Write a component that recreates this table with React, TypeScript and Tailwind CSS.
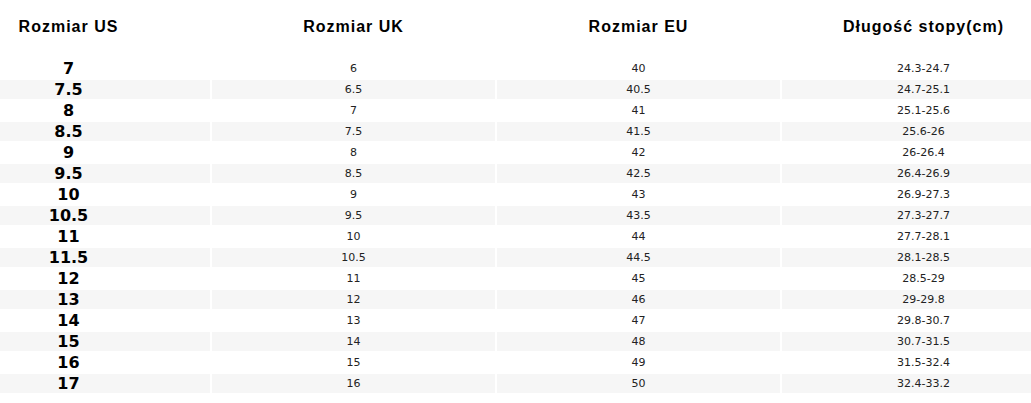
import React from "react";

const rows: [string, string, string, string][] = [
  ["7", "6", "40", "24.3-24.7"],
  ["7.5", "6.5", "40.5", "24.7-25.1"],
  ["8", "7", "41", "25.1-25.6"],
  ["8.5", "7.5", "41.5", "25.6-26"],
  ["9", "8", "42", "26-26.4"],
  ["9.5", "8.5", "42.5", "26.4-26.9"],
  ["10", "9", "43", "26.9-27.3"],
  ["10.5", "9.5", "43.5", "27.3-27.7"],
  ["11", "10", "44", "27.7-28.1"],
  ["11.5", "10.5", "44.5", "28.1-28.5"],
  ["12", "11", "45", "28.5-29"],
  ["13", "12", "46", "29-29.8"],
  ["14", "13", "47", "29.8-30.7"],
  ["15", "14", "48", "30.7-31.5"],
  ["16", "15", "49", "31.5-32.4"],
  ["17", "16", "50", "32.4-33.2"],
];

const headers = ["Rozmiar US", "Rozmiar UK", "Rozmiar EU", "Długość stopy(cm)"];

export default function App() {
  return (
    <div className="w-[1031px] h-[403px] overflow-hidden bg-white">
      <div className="ml-[-73px] w-[1138px] flex flex-col gap-[2px]">
        <div className="grid grid-cols-[283px_283px_283px_283px] gap-[2px] h-[57px]">
          {headers.map((h) => (
            <div
              key={h}
              className="flex justify-center pt-[17px] text-[16px] leading-[20px] font-bold tracking-[1px] text-black"
              style={{ fontFamily: '"Liberation Sans", Arial, sans-serif' }}
            >
              {h}
            </div>
          ))}
        </div>
        {rows.map((r, i) => {
          const bg = i % 2 === 1 ? "bg-[#f6f6f6]" : "bg-white";
          return (
            <div key={r[0]} className="grid grid-cols-[283px_283px_283px_283px] gap-[2px] h-[19px]">
              <div
                className={`${bg} flex items-center justify-center text-[16px] leading-[19px] font-bold text-black`}
                style={{ fontFamily: '"DejaVu Sans", Verdana, sans-serif' }}
              >
                {r[0]}
              </div>
              {r.slice(1).map((c, j) => (
                <div
                  key={j}
                  className={`${bg} flex items-center justify-center text-[11px] leading-[19px] text-[#222222]`}
                  style={{ fontFamily: '"DejaVu Sans", Verdana, sans-serif' }}
                >
                  {c}
                </div>
              ))}
            </div>
          );
        })}
      </div>
    </div>
  );
}
